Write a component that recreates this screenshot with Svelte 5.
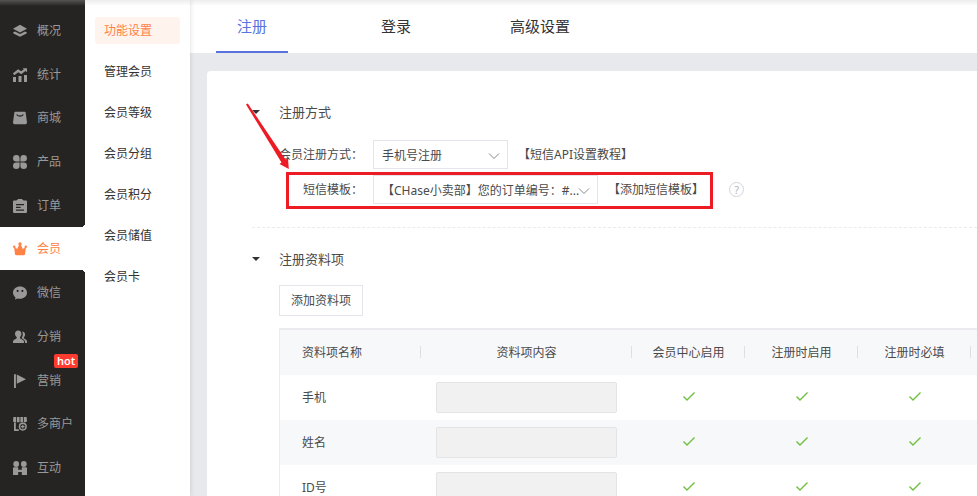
<script lang="ts">
	type Item = { label: string; icon: string; badge?: string };

	const mainMenu: Item[] = [
		{ label: '概况', icon: 'layers' },
		{ label: '统计', icon: 'stats' },
		{ label: '商城', icon: 'shop' },
		{ label: '产品', icon: 'product' },
		{ label: '订单', icon: 'order' },
		{ label: '会员', icon: 'crown' },
		{ label: '微信', icon: 'wechat' },
		{ label: '分销', icon: 'users' },
		{ label: '营销', icon: 'flag', badge: 'hot' },
		{ label: '多商户', icon: 'store' },
		{ label: '互动', icon: 'interact' }
	];

	const subMenu = ['功能设置', '管理会员', '会员等级', '会员分组', '会员积分', '会员储值', '会员卡'];
	const tabs = ['注册', '登录', '高级设置'];
	const switches = ['会员中心启用', '注册时启用', '注册时必填'];
	const fields = ['手机', '姓名', 'ID号'];

	let activeMain = $state('会员');
	let activeSub = $state('功能设置');
	let activeTab = $state('注册');
	let openMethod = $state(true);
	let openFields = $state(true);
</script>

{#snippet icon(name: string)}
	<svg class="icon" viewBox="0 0 14 14" aria-hidden="true">
		{#if name === 'layers'}
			<path d="M7 .8 14 4.7 7 8.6 0 4.7z" />
			<path d="M0 8.4 2 7.4 7 10 12 7.4 14 8.4Q13.600 9.400 12.600 10L7 12.800 1.400 10Q.4 9.400 0 8.400z" />
		{:else if name === 'stats'}
			<path d="M0 9h3v5H0zM5.5 8h3v6h-3zM11 7h3v7h-3z" />
			<path d="M.6 6.2 5.2 2.8 8.2 4.8 12.6 1.4" fill="none" stroke="currentColor" stroke-width="2.4" />
			<path d="M9.6.2H14v4z" />
		{:else if name === 'shop'}
			<path
				fill-rule="evenodd"
				d="M2.4.8h9.2q.9 0 1.1.9L14 11.4q.1 1.8-1.6 1.8H1.6Q-.1 13.2 0 11.4L1.3 1.7q.2-.9 1.1-.9zM3.3 3.6C4 6.4 10 6.4 10.7 3.6l-1-.4C9 4.8 5 4.8 4.3 3.2z"
			/>
		{:else if name === 'product'}
			<path
				d="M3.4 0a3.3 3.3 0 0 1 3.2 3.3v3.3H3.3A3.3 3.3 0 0 1 3.4 0zM10.6 0a3.3 3.3 0 0 1 .1 6.6H7.4V3.3A3.3 3.3 0 0 1 10.6 0zM3.3 7.4h3.3v3.3A3.3 3.3 0 1 1 3.3 7.4zM7.4 7.4h3.3a3.3 3.3 0 1 1-3.3 3.3z"
			/>
		{:else if name === 'order'}
			<path
				fill-rule="evenodd"
				d="M3.6 1h6.8v.6H13q1 0 1 1V13q0 1-1 1H1q-1 0-1-1V2.6q0-1 1-1h2.6zM3 4.9v1.3h8V4.9zM3 7.7V9h4.6V7.7zM3 10.4v1.3h8v-1.3z"
			/>
			<path d="M4.6 0h4.8v3H4.6z" />
		{:else if name === 'crown'}
			<circle cx="7" cy="1.9" r="1.7" />
			<circle cx="1.2" cy="4.8" r="1.2" />
			<circle cx="12.8" cy="4.8" r="1.2" />
			<path d="M1 4.6 4.2 7 6.2 2.8h1.6L9.8 7 13 4.6 12 12.2q-.2 1-1.2 1H3.2q-1 0-1.2-1z" />
		{:else if name === 'wechat'}
			<path
				fill-rule="evenodd"
				d="M7 .6c3.9 0 7 2.7 7 6.1s-3.1 6.1-7 6.1c-.8 0-1.6-.1-2.3-.3L1.9 13.6l.6-2.3C1 10.2 0 8.6 0 6.7 0 3.3 3.1.6 7 .6zM4.6 3.7a1 1.2 0 1 0 .01 0zM9.4 3.7a1 1.2 0 1 0 .01 0z"
			/>
		{:else if name === 'users'}
			<path
				d="M5.2.6c2 0 3.200 1.400 3.200 3.200 0 1.500-.6 2.600-1.400 3.300v1.200l3 1.700q1 .6 1 1.800V13H0v-1.400q0-1.100.9-1.600l2.800-1.700V7.100C2.800 6.400 2 5.300 2 3.800 2 2 3.200.6 5.200.6z"
			/>
			<path d="M9.200 1.600c1.700.1 2.900 1.300 2.900 2.900 0 1.200-.5 2.200-1.200 2.800v1l2.200 1.500q.9.500.9 1.600V13h-2v-1.400q-.2-1.500-1.400-2.200L8.500 8.100Q10.700 5.200 9.200 1.600z" />
		{:else if name === 'flag'}
			<path d="M1 .2h1.900V14H1zM3.800.6 13 5.200 3.800 9.800z" />
		{:else if name === 'store'}
			<path d="M.4 0h2.800v5.200Q.2 5.600 0 4zM4 0h2.600v5.200H4zM7.400 0H10v5.200H7.400zM10.800 0h2.800L14 4q-.2 1.600-3.200 1.200z" />
			<path d="M1 5.600h1.800v6.600h3V14H1z" />
			<circle cx="9.800" cy="9.600" r="3.300" fill="none" stroke="currentColor" stroke-width="1.500" />
			<path d="M9.200 7.800h1.200V9h1.200v1.200h-1.200v1.200H9.200v-1.200H8V9h1.200z" />
		{:else if name === 'interact'}
			<circle cx="3.2" cy="3" r="2.900" />
			<circle cx="10.8" cy="3" r="2.900" />
			<path d="M0 7.200q0-1 1-1h4.200V8.800h3.600V6.200H13q1 0 1 1V14H8.800v-3H5.200v3H0z" />
		{/if}
	</svg>
{/snippet}

{#snippet chevron()}
	<svg class="chevron" viewBox="0 0 12 8" aria-hidden="true">
		<path d="M1 1.5 6 6.5 11 1.5" />
	</svg>
{/snippet}

<div class="app">
	<nav class="sidebar" aria-label="主菜单">
		<ul>
			{#each mainMenu as item (item.label)}
				<li class:active={item.label === activeMain}>
					<a href="#{item.icon}" onclick={() => (activeMain = item.label)}>
						{@render icon(item.icon)}
						{item.label}
					</a>
					{#if item.badge}
						<span class="badge">{item.badge}</span>
					{/if}
				</li>
			{/each}
		</ul>
	</nav>

	<nav class="submenu" aria-label="会员">
		{#each subMenu as label (label)}
			<a href="#member" class:active={label === activeSub} onclick={() => (activeSub = label)}>{label}</a>
		{/each}
	</nav>

	<main>
		<div class="tabs" role="tablist">
			{#each tabs as tab (tab)}
				<button role="tab" aria-selected={tab === activeTab} onclick={() => (activeTab = tab)}>{tab}</button>
			{/each}
		</div>

		<div class="card">
			<section>
				<h2>
					<button class="toggle" aria-expanded={openMethod} onclick={() => (openMethod = !openMethod)}>
						<span class="caret"></span>注册方式
					</button>
				</h2>
				{#if openMethod}
					<div class="form">
						<div class="row">
							<label for="method">会员注册方式：</label>
							<div class="select short">
								<select id="method">
									<option>手机号注册</option>
								</select>
								{@render chevron()}
							</div>
							<a href="#guide">【短信API设置教程】</a>
						</div>
						<div class="row">
							<label for="template">短信模板：</label>
							<div class="select">
								<select id="template">
									<option>【CHase小卖部】您的订单编号：#...</option>
								</select>
								{@render chevron()}
							</div>
							<a href="#template">【添加短信模板】</a>
							<button class="help" aria-label="帮助">?</button>
						</div>
					</div>
				{/if}
			</section>

			<section>
				<h2>
					<button class="toggle" aria-expanded={openFields} onclick={() => (openFields = !openFields)}>
						<span class="caret"></span>注册资料项
					</button>
				</h2>
				{#if openFields}
					<div class="fields">
						<button class="add">添加资料项</button>
						<div class="table-box">
							<table>
								<colgroup>
									<col class="col-name" />
									<col class="col-content" />
									{#each switches as name (name)}
										<col class="col-switch" />
									{/each}
									<col />
								</colgroup>
								<thead>
									<tr>
										<th scope="col">资料项名称</th>
										<th scope="col">资料项内容</th>
										{#each switches as name (name)}
											<th scope="col">{name}</th>
										{/each}
										<td></td>
									</tr>
								</thead>
								<tbody>
									{#each fields as field, i (field)}
										<tr>
											<th scope="row"><label for="field-{i}">{field}</label></th>
											<td><input id="field-{i}" type="text" disabled /></td>
											{#each switches as name (name)}
												<td>
													<svg class="check" viewBox="0 0 14 16" role="img" aria-label={name}>
														<path d="M1.5 6.5 5 10 12.5 2.5" />
													</svg>
												</td>
											{/each}
											<td></td>
										</tr>
									{/each}
								</tbody>
							</table>
						</div>
					</div>
				{/if}
			</section>

			<svg class="callout" viewBox="0 0 470 112" aria-hidden="true">
				<rect x="42.5" y="72.5" width="424" height="34" />
				<path d="M1 3.500 2.800 2.500 40.500 58.500 43 57.500 43.800 68 34.500 63 36.500 61.500z" />
			</svg>
		</div>
	</main>
</div>

<style>
	:global(body) {
		margin: 0;
	}
	.app {
		display: flex;
		height: 100vh;
		overflow: hidden;
		font: 12px/20px 'Noto Sans', 'Noto Sans CJK SC', sans-serif;
		color: #4a4a4a;
	}
	a {
		color: inherit;
		text-decoration: none;
	}
	button,
	select,
	input {
		box-sizing: border-box;
		margin: 0;
		font: inherit;
		color: inherit;
	}

	/* primary menu */
	.sidebar {
		flex: none;
		box-sizing: border-box;
		width: 85px;
		padding: 8px 0 7px;
		background: linear-gradient(#555452, #262422 6px);
		color: #999;
	}
	.sidebar ul {
		display: grid;
		grid-auto-rows: 1fr;
		height: 100%;
		margin: 0;
		padding: 0;
		list-style: none;
	}
	.sidebar li {
		position: relative;
		display: flex;
	}
	.sidebar a {
		display: flex;
		flex: 1;
		align-items: center;
		gap: 10px;
		padding: 2px 0 0 13px;
	}
	.sidebar .active {
		background: #fff;
		color: #ff8246;
	}
	.sidebar .active::before,
	.sidebar .active::after {
		content: '';
		position: absolute;
		right: 0;
		width: 4px;
		height: 4px;
	}
	.sidebar .active::before {
		bottom: 100%;
		background: radial-gradient(circle at 0 0, transparent 4px, #fff 4px);
	}
	.sidebar .active::after {
		top: 100%;
		background: radial-gradient(circle at 0 100%, transparent 4px, #fff 4px);
	}
	.icon {
		width: 14px;
		height: 14px;
		fill: currentColor;
	}
	.badge {
		position: absolute;
		top: -4px;
		left: 54px;
		padding: 0 3px;
		border-radius: 2px;
		background: #ff3b30;
		color: #fff;
		font-size: 11px;
		font-weight: 600;
		line-height: 14px;
	}

	/* secondary menu, its shadow falls on the content side only */
	.submenu {
		z-index: 1;
		flex: none;
		display: flex;
		flex-direction: column;
		gap: 14px;
		box-sizing: border-box;
		width: 105px;
		padding: 17px 10px;
		background: linear-gradient(#ededed, #fff 6px);
		box-shadow: 0 0 5px rgba(0, 0, 0, 0.15);
		clip-path: inset(0 -8px 0 0);
		color: #333;
	}
	.submenu a {
		padding-left: 9px;
		border-radius: 3px;
		line-height: 27px;
	}
	.submenu .active {
		background: #fff3ee;
		color: #ff8246;
	}

	/* content */
	main {
		flex: 1;
		display: flex;
		flex-direction: column;
		min-width: 0;
		background: #e8e9ed;
	}
	.tabs {
		flex: none;
		display: flex;
		gap: 72px;
		height: 53px;
		padding-left: 26px;
		background: linear-gradient(#ededed, #fff 6px);
	}
	.tabs button {
		width: 72px;
		padding: 0;
		border: 0;
		border-bottom: 2px solid transparent;
		background: none;
		color: #333;
		font-size: 15px;
		white-space: nowrap;
	}
	.tabs [aria-selected='true'] {
		border-color: #5872de;
		color: #5872de;
	}
	.card {
		position: relative;
		flex: 1;
		margin: 18px 0 0 17px;
		padding: 31px 0 0 45px;
		border-radius: 4px 0 0 0;
		background: #fff;
	}
	section + section {
		margin-top: 23px;
		padding-top: 21px;
		border-top: 1px dashed #ebebeb;
	}
	h2 {
		margin: 0;
		font-size: 13px;
		font-weight: 400;
	}
	.toggle {
		display: flex;
		align-items: center;
		gap: 19px;
		padding: 0;
		border: 0;
		background: none;
	}
	.caret {
		border: solid transparent;
		border-width: 4px 4px 0;
		border-top-color: #333;
	}
	.form {
		display: grid;
		gap: 6px;
		padding: 18px 0 0 27px;
	}
	.row {
		display: flex;
		align-items: center;
		gap: 10px;
		height: 29px;
		white-space: nowrap;
	}
	.row label {
		width: 84px;
		text-align: right;
	}
	.select {
		position: relative;
		width: 225px;
	}
	.select.short {
		width: 135px;
	}
	select {
		display: block;
		width: 100%;
		height: 29px;
		padding: 2px 12px 0 8px;
		border: 1px solid #e4e4ea;
		border-radius: 0;
		background: #fff;
		appearance: none;
	}
	.chevron {
		position: absolute;
		top: 12px;
		right: 8px;
		width: 12px;
		height: 8px;
		fill: none;
		stroke: #888;
		pointer-events: none;
	}
	.help {
		width: 15px;
		height: 15px;
		margin-left: 15px;
		padding: 0;
		border: 1px solid #d5d5d5;
		border-radius: 50%;
		background: none;
		color: #b5b5b5;
		font-size: 11px;
		line-height: 13px;
	}
	.fields {
		padding: 16px 0 0 27px;
	}
	.add {
		height: 31px;
		padding: 0 11px;
		border: 1px solid #e4e4ea;
		background: #fff;
	}
	.table-box {
		margin-top: 12px;
		border: solid #ebebf0;
		border-width: 2px 0 0 1px;
	}
	table {
		width: 100%;
		border-spacing: 0;
		table-layout: fixed;
	}
	.col-name {
		width: 141px;
	}
	.col-content {
		width: 211px;
	}
	.col-switch {
		width: 113px;
	}
	tr {
		height: 45px;
	}
	thead tr,
	tbody tr:nth-child(even) {
		background: #f7f8fa;
	}
	th,
	td {
		position: relative;
		padding: 0;
		font-weight: 400;
		text-align: center;
		white-space: nowrap;
	}
	th:first-child {
		padding-left: 22px;
		text-align: left;
	}
	thead th::after {
		content: '';
		position: absolute;
		top: 16px;
		right: 0;
		height: 12px;
		border-right: 1px solid #dfe0e4;
	}
	input {
		display: block;
		width: 181px;
		height: 31px;
		margin: 0 auto;
		border: 1px solid #e4e4e4;
		border-radius: 2px;
		background: #f1f1f1;
	}
	.check {
		display: block;
		width: 14px;
		height: 16px;
		margin: 0 auto;
		fill: none;
		stroke: #6fbf3f;
		stroke-width: 1.4;
	}

	/* arrow and frame laid over the form */
	.callout {
		position: absolute;
		top: 30px;
		left: 38px;
		width: 470px;
		height: 112px;
		fill: #ed1c24;
		pointer-events: none;
	}
	.callout rect {
		fill: none;
		stroke: #ed1c24;
		stroke-width: 3;
	}
</style>
